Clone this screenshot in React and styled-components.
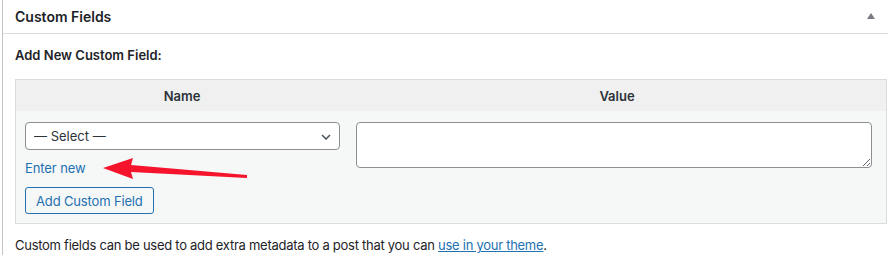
import React from "react";
import styled, { createGlobalStyle } from "styled-components";

const Global = createGlobalStyle`
  html, body { margin: 0; padding: 0; background: #fff; overflow: hidden; }
  body { font-family: Inter, "Liberation Sans", sans-serif; color: #1d2327; }
`;

const Page = styled.div`
  width: 888px;
  height: 262px;
  overflow: hidden;
  position: relative;
`;

const Panel = styled.section`
  margin-left: 2px;
  width: 897px;
  border-left: 1px solid #c3c4c7;
  background: #fff;
`;

const PanelHeader = styled.div`
  height: 33px;
  display: flex;
  align-items: center;
  justify-content: space-between;
  padding: 0 25px 0 12px;
  border-bottom: 1px solid #dcdcde;
`;

const Title = styled.h2`
  margin: 0;
  font-size: 14px;
  font-weight: 600;
  color: #1d2327;
`;

const Toggle = styled.svg`
  width: 8px;
  height: 6px;
  margin-top: -1px;
`;

const Inside = styled.div`
  padding: 12px 12px 0 12px;
`;

const SubHeading = styled.p`
  margin: 0 0 14px 0;
  font-size: 13px;
  line-height: 19px;
  font-weight: 600;
`;

const Table = styled.table`
  width: 872px;
  border: 1px solid #dcdcde;
  border-spacing: 0;
  background: #f6f7f7;
  table-layout: fixed;
`;

const Th = styled.th`
  height: 31px;
  padding: 0;
  background: #f0f0f1;
  font-size: 13px;
  font-weight: 600;
  color: #2c3338;
  text-align: center;
  width: ${(p) => p.$w || "auto"};
`;

const Td = styled.td`
  vertical-align: top;
  padding: ${(p) => p.$pad};
`;

const SelectWrap = styled.div`
  position: relative;
  width: 315px;
`;

const Select = styled.select`
  appearance: none;
  -webkit-appearance: none;
  width: 100%;
  height: 28px;
  box-sizing: border-box;
  border: 1px solid #8c8f94;
  border-radius: 4px;
  background: #fff;
  padding: 0 24px 0 8px;
  font-family: Inter, "Liberation Sans", sans-serif;
  font-size: 13px;
  color: #2c3338;
`;

const Chevron = styled.svg`
  position: absolute;
  right: 9px;
  top: 12px;
  width: 10px;
  height: 6px;
  pointer-events: none;
`;

const LinkLine = styled.a`
  display: block;
  margin-top: 9px;
  font-size: 13px;
  line-height: 18px;
  letter-spacing: -0.1px;
  color: #2271b1;
  text-decoration: none;
`;

const Button = styled.button`
  display: block;
  margin: 10px 0 9px 0;
  height: 27px;
  padding: 0 10px;
  border: 1px solid #2271b1;
  border-radius: 3px;
  background: #f6f7f7;
  color: #2271b1;
  font-family: Inter, "Liberation Sans", sans-serif;
  font-size: 13px;
  letter-spacing: -0.15px;
`;

const TextArea = styled.textarea`
  display: block;
  width: 516px;
  height: 46px;
  box-sizing: border-box;
  border: 1px solid #8c8f94;
  border-radius: 4px;
  background: #fff;
  margin: 0;
`;

const Note = styled.p`
  margin: 12px 0 0 0;
  font-size: 13px;
  line-height: 19px;
  letter-spacing: -0.27px;
  color: #1d2327;
`;

const NoteLink = styled.a`
  color: #2271b1;
  text-decoration: underline;
`;

const Arrow = styled.svg`
  position: absolute;
  left: 100px;
  top: 155px;
  width: 152px;
  height: 26px;
  pointer-events: none;
`;

export default function App() {
  return (
    <Page>
      <Global />
      <Panel>
        <PanelHeader>
          <Title>Custom Fields</Title>
          <Toggle viewBox="0 0 8 6">
            <polygon points="4,0 8,6 0,6" fill="#787c82" />
          </Toggle>
        </PanelHeader>
        <Inside>
          <SubHeading>Add New Custom Field:</SubHeading>
          <Table>
            <thead>
              <tr>
                <Th $w="332px">Name</Th>
                <Th>Value</Th>
              </tr>
            </thead>
            <tbody>
              <tr>
                <Td $pad="11px 8px 0 9px">
                  <SelectWrap>
                    <Select defaultValue="">
                      <option value="">— Select —</option>
                    </Select>
                    <Chevron viewBox="0 0 10 6">
                      <polyline points="1,1 5,5 9,1" fill="none" stroke="#50575e" strokeWidth="1.6" />
                    </Chevron>
                  </SelectWrap>
                  <LinkLine href="#">Enter new</LinkLine>
                  <Button>Add Custom Field</Button>
                </Td>
                <Td $pad="11px 8px 0 8px">
                  <TextArea />
                </Td>
              </tr>
            </tbody>
          </Table>
          <Note>
            Custom fields can be used to add extra metadata to a post that you can{" "}
            <NoteLink href="#">use in your theme</NoteLink>.
          </Note>
        </Inside>
      </Panel>
      <Arrow viewBox="0 0 152 26">
        <polygon points="3,13 33,3 31,10 147,20 147,23 31,17 33,24" fill="#f5142c" />
      </Arrow>
    </Page>
  );
}
